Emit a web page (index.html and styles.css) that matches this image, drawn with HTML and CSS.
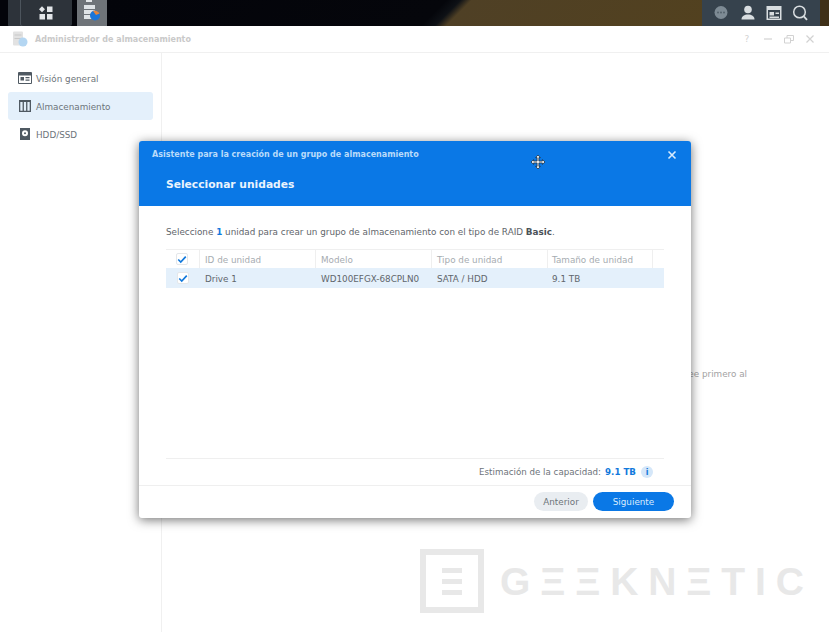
FILE: index.html
```html
<!DOCTYPE html>
<html lang="es">
<head>
<meta charset="utf-8">
<title>Administrador de almacenamiento</title>
<link rel="stylesheet" href="styles.css">
</head>
<body>
<div class="desktop">
  <header class="taskbar">
    <div class="task-left">
      <div class="task-btn grid-btn">
        <svg width="14" height="14" viewBox="0 0 14 14"><path fill="#e2e5e8" d="M0 3.200 3 .2l3 3-3 3zM8 .5h5.500v5.500H8zM.5 8H6v5.500H.5zM8 8h5.500v5.500H8z"/></svg>
      </div>
      <div class="task-btn app-btn">
        <svg width="18" height="26" viewBox="0 0 18 26"><rect x="3" y="0" width="6" height="2" fill="#e3e6e8"/><rect x="1" y="5" width="11" height="4" fill="#dfe3e6"/><rect x="1" y="10" width="11" height="4" fill="#dfe3e6"/><rect x="1" y="15" width="11" height="4" fill="#dfe3e6"/><circle cx="12" cy="15.500" r="5" fill="#1b75d8"/><path d="M10 11a5 5 0 0 1 6.500 2.500L13 15z" fill="#e5853a"/></svg>
      </div>
    </div>
    <div class="wallpaper"></div>
    <div class="task-right">
      <svg width="18" height="18" viewBox="0 0 18 18"><circle cx="9" cy="8.500" r="6.500" fill="#7d8a94"/><circle cx="6" cy="8.500" r="1" fill="#55626c"/><circle cx="9" cy="8.500" r="1" fill="#55626c"/><circle cx="12" cy="8.500" r="1" fill="#55626c"/></svg>
      <svg width="18" height="18" viewBox="0 0 18 18"><circle cx="9" cy="5.500" r="3.800" fill="#d8dde0"/><path fill="#d8dde0" d="M2.500 15.500c0-3.500 3-5 6.500-5s6.500 1.500 6.500 5z"/></svg>
      <svg width="16" height="16" viewBox="0 0 16 16"><path fill="#d8dde0" fill-rule="evenodd" d="M.5 1h15v14H.5zM2 5v8.500h12V5zM3.500 7H8v3.500H3.500zM9.500 7.500H13V9H9.500zM3.500 11.500h9.500V13H3.500z"/></svg>
      <svg width="18" height="18" viewBox="0 0 18 18"><circle cx="8.500" cy="8" r="5.800" fill="none" stroke="#d8dde0" stroke-width="1.500"/><path d="m12.800 12.300 3.200 3.500" stroke="#d8dde0" stroke-width="1.800"/></svg>
    </div>
    <div class="task-edge"></div>
  </header>

  <main class="window">
    <div class="titlebar">
      <div class="title-left">
        <svg class="title-icon" width="16" height="16" viewBox="0 0 16 16"><rect x="1" y="0.500" width="10" height="14" rx="1" fill="#e2e2e2"/><path d="M2.500 4h7M2.500 7.500h7" stroke="#c8c8c8"/><circle cx="11" cy="11" r="4.500" fill="#b4d6f2"/></svg>
        <span class="title-text">Administrador de almacenamiento</span>
      </div>
      <div class="title-actions">
        <span class="help">?</span>
        <svg width="10" height="10" viewBox="0 0 10 10"><path d="M1 5h8" stroke="#d2d2d2" stroke-width="1.200"/></svg>
        <svg width="10" height="10" viewBox="0 0 10 10"><path d="M.5 4h6v5h-6zM3 4V1.500h6.500V6.500H6.500" fill="none" stroke="#d2d2d2"/></svg>
        <svg width="10" height="10" viewBox="0 0 10 10"><path d="m1.500 1.500 7 7m0-7-7 7" stroke="#d2d2d2" stroke-width="1.200"/></svg>
      </div>
    </div>
    <div class="window-body">
      <nav class="sidebar">
        <div class="nav-item">
          <svg width="14" height="12" viewBox="0 0 14 12"><path fill="#4f5962" fill-rule="evenodd" d="M1 0h12a1 1 0 0 1 1 1v10a1 1 0 0 1-1 1H1a1 1 0 0 1-1-1V1a1 1 0 0 1 1-1zM1 3.500V11h12V3.500zM2.500 5H6v3.500H2.500zM7.500 5h4v1.200h-4zM7.500 7.500h4v1.200h-4z"/></svg>
          <span class="nav-label">Visión general</span>
        </div>
        <div class="nav-item active">
          <svg width="12" height="12" viewBox="0 0 12 12"><path fill="#4f5962" fill-rule="evenodd" d="M0 0h12v12H0zM1.300 2v8.700h2.300V2zM4.900 2v8.700h2.200V2zM8.400 2v8.700h2.300V2z"/></svg>
          <span class="nav-label">Almacenamiento</span>
        </div>
        <div class="nav-item">
          <svg width="12" height="12" viewBox="0 0 12 12"><path fill="#4f5962" fill-rule="evenodd" d="M1 0h10v12H1zM6 2.200a3 3 0 1 0 0 6 3 3 0 0 0 0-6zM6 4.200a1 1 0 1 1 0 2 1 1 0 0 1 0-2z"/></svg>
          <span class="nav-label">HDD/SSD</span>
        </div>
      </nav>
      <section class="content">
        <p class="hint">ee primero al</p>
      </section>
    </div>
  </main>

  <div class="watermark">
    <div class="wm-box"><span class="wm-e"><i></i><i></i><i></i></span></div>
    <span class="wm-text">GΞΞKNΞTIC</span>
  </div>

  <div class="dialog">
    <div class="dialog-head">
      <div class="dialog-top">
        <span class="dialog-sub">Asistente para la creación de un grupo de almacenamiento</span>
        <svg class="dialog-close" width="10" height="10" viewBox="0 0 10 10"><path d="m1.500 1.500 7 7m0-7-7 7" stroke="#d8ebfd" stroke-width="1.600"/></svg>
      </div>
      <h1 class="dialog-title">Seleccionar unidades</h1>
      <svg class="move-cursor" width="14" height="14" viewBox="0 0 14 14"><path d="M7 0 9.300 2.600H7.900v3.500h3.500V4.700L14 7l-2.600 2.300V7.900H7.900v3.500h1.400L7 14l-2.300-2.600h1.400V7.900H2.600v1.400L0 7l2.600-2.300v1.400h3.500V2.600H4.700z" fill="#fff" stroke="#1c2c3c" stroke-width=".8"/></svg>
    </div>
    <div class="dialog-body">
      <p class="intro">Seleccione <b class="num">1</b> unidad para crear un grupo de almacenamiento con el tipo de RAID <b>Basic</b>.</p>
      <div class="table">
        <div class="row head">
          <div class="cell check"><span class="box"><svg width="10" height="9" viewBox="0 0 12 10"><path d="m1.500 5 3 3 6-6.500" fill="none" stroke="#1279dc" stroke-width="2"/></svg></span></div>
          <div class="cell c-id">ID de unidad</div>
          <div class="cell c-model">Modelo</div>
          <div class="cell c-type">Tipo de unidad</div>
          <div class="cell c-size">Tamaño de unidad</div>
          <div class="cell c-end"></div>
        </div>
        <div class="row selected">
          <div class="cell check"><span class="box"><svg width="10" height="9" viewBox="0 0 12 10"><path d="m1.500 5 3 3 6-6.500" fill="none" stroke="#1279dc" stroke-width="2"/></svg></span></div>
          <div class="cell c-id">Drive 1</div>
          <div class="cell c-model">WD100EFGX-68CPLN0</div>
          <div class="cell c-type">SATA / HDD</div>
          <div class="cell c-size">9.1 TB</div>
          <div class="cell c-end"></div>
        </div>
      </div>
      <div class="capacity">
        <span>Estimación de la capacidad:</span>
        <b class="cap-val">9.1 TB</b>
        <span class="info">i</span>
      </div>
    </div>
    <div class="dialog-foot">
      <button class="btn secondary">Anterior</button>
      <button class="btn primary">Siguiente</button>
    </div>
  </div>
</div>
</body>
</html>
```
FILE: styles.css
```css
* { box-sizing: border-box; }
html, body { margin: 0; padding: 0; }
body { font-family: "DejaVu Sans", sans-serif; }
.desktop { position: relative; width: 829px; height: 632px; overflow: hidden; background: #fff; display: flex; flex-direction: column; }

.taskbar { height: 26px; flex: none; display: flex; background: #03040a; }
.task-left { display: flex; padding-left: 8px; gap: 5px; width: 107px; flex: none; }
.task-btn { height: 26px; display: flex; align-items: center; justify-content: center; }
.grid-btn { width: 64px; background: #2d333a; padding-left: 12px; border-left: 0; box-shadow: inset 12px 0 0 #2d333a, inset 13px 0 0 #4c545c; border-radius: 0 0 2px 2px; }
.app-btn { width: 30px; background: #6f7479; }
.wallpaper { flex: 1; background: linear-gradient(135deg, #03040a 0, #05060b 240px, #0e1116 250px, #4f4025 258px, #52411f 100%); }
.task-right { width: 118px; flex: none; background: #36424d; display: flex; align-items: center; gap: 9px; padding-left: 10px; }
.task-edge { flex: none; width: 9px; background: #3f3018; }

.window { flex: 1; display: flex; flex-direction: column; background: #fff; }
.titlebar { height: 27px; flex: none; display: flex; align-items: center; justify-content: space-between; border-bottom: 1px solid #f0f0f0; padding: 0 14px 0 12px; }
.title-left { display: flex; align-items: center; gap: 7px; }
.title-icon { flex: none; }
.title-text { font-size: 8px; font-weight: 700; color: #c9c9c9; }
.title-actions { display: flex; align-items: center; gap: 11px; }
.help { font-size: 9px; color: #d2d2d2; width: 10px; text-align: center; }
.window-body { flex: 1; display: flex; min-height: 0; }
.sidebar { width: 162px; flex: none; border-right: 1px solid #f0f0f0; padding: 11px 8px 0; display: flex; flex-direction: column; }
.nav-item { height: 28px; display: flex; align-items: center; gap: 4px; padding-left: 10px; font-size: 8.800px; color: #6d747a; border-radius: 3px; }
.nav-item svg { width: 14px; flex: none; }
.nav-label { padding-top: 1px; }
.nav-item.active { background: #e4f0fb; }
.content { flex: 1; position: relative; }
.hint { position: absolute; margin: 0; top: 316px; right: 82px; font-size: 8.800px; color: #a2a2a2; white-space: nowrap; }

.watermark { position: absolute; left: 420px; top: 549px; display: flex; align-items: center; gap: 16px; }
.wm-box { width: 64px; height: 64px; border: 6px solid #e8e8e8; display: flex; align-items: center; justify-content: center; }
.wm-e { display: flex; flex-direction: column; gap: 6px; width: 20px; }
.wm-e i { display: block; height: 5px; background: #e8e8e8; }
.wm-text { font-family: "Liberation Sans", sans-serif; font-size: 39px; font-weight: 700; letter-spacing: 9.900px; color: #e8e8e8; line-height: 1; }

.dialog { position: absolute; left: 139px; top: 141px; width: 552px; height: 377px; background: #fff; border-radius: 3px; display: flex; flex-direction: column; box-shadow: 0 2px 11px rgba(0,0,0,.55); }
.dialog-head { position: relative; height: 65px; flex: none; background: #0a78e6; border-radius: 3px 3px 0 0; padding: 0 14px 0 13px; }
.dialog-top { height: 27px; display: flex; align-items: center; justify-content: space-between; }
.dialog-sub { font-size: 8px; font-weight: 700; color: #b9dbfa; }
.dialog-close { flex: none; }
.dialog-title { margin: 0; padding: 10px 0 0 14px; font-size: 10.700px; font-weight: 700; color: #e9f3fd; line-height: 14px; }
.move-cursor { position: absolute; left: 392px; top: 14px; }
.dialog-body { flex: 1; display: flex; flex-direction: column; padding: 0 27px; min-height: 0; }
.intro { margin: 20px 0 0; font-size: 8.800px; line-height: 12px; color: #5f666c; }
.intro b { color: #4b5258; }
.intro b.num { color: #1279dc; }
.table { margin-top: 11px; flex: 1; }
.row { display: flex; height: 20px; align-items: stretch; font-size: 8.800px; color: #5f666c; }
.row.head { height: 19px; color: #a6acb1; border-top: 1px solid #efefef; }
.row.selected { background: #e4f0fb; }
.cell { display: flex; align-items: center; padding: 1px 0 0 5px; }
.head .cell { border-right: 1px solid #efefef; }
.check { width: 34px; padding: 0 1px 0 0; justify-content: center; }
.c-id { width: 116px; }
.c-model { width: 116px; }
.c-type { width: 116px; }
.c-size { width: 105px; padding-left: 4px; }
.c-end { width: 11px; }
.head .c-end { border-right: 0; }
.box { width: 12px; height: 12px; background: #fff; border: 1px solid #e4e7ea; display: flex; align-items: center; justify-content: center; border-radius: 2px; }
.capacity { height: 27px; flex: none; border-top: 1px solid #efefef; display: flex; align-items: center; justify-content: flex-end; gap: 4px; padding-right: 11px; font-size: 8.700px; color: #6d747a; }
.cap-val { color: #1279dc; }
.info { width: 12px; height: 12px; margin-left: 1px; border-radius: 50%; background: #d5e7f9; color: #1279dc; font-size: 8px; font-weight: 700; display: flex; align-items: center; justify-content: center; }
.dialog-foot { height: 33px; flex: none; border-top: 1px solid #efefef; display: flex; align-items: flex-start; justify-content: flex-end; gap: 5px; padding: 6px 17px 0 0; }
.btn { height: 19px; border: 0; border-radius: 10px; font-family: inherit; font-size: 8.800px; padding: 0; }
.btn.secondary { width: 54px; background: #e9edf1; color: #6d747a; }
.btn.primary { width: 81px; background: #0a78e6; color: #d9ebfd; }
```
